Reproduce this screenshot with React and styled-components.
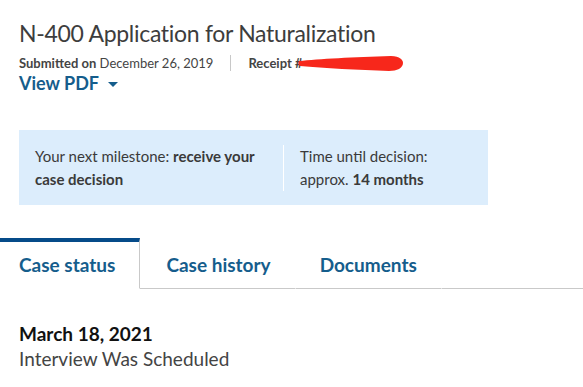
import React, { useState } from "react";
import styled, { createGlobalStyle } from "styled-components";

const GlobalStyle = createGlobalStyle`
  html, body {
    margin: 0;
    padding: 0;
    background: #fff;
    font-family: Lato, "Open Sans", sans-serif;
    color: #333;
  }
`;

const Page = styled.div`
  width: 583px;
  height: 387px;
  overflow: hidden;
`;

const Header = styled.div`
  padding: 16px 19px 0;
`;

const Title = styled.h1`
  margin: 0;
  font-size: 23px;
  font-weight: 400;
  line-height: 34px;
  color: #3d3d3d;
  letter-spacing: -0.3px;
`;

const Meta = styled.div`
  display: flex;
  align-items: center;
  font-size: 13px;
  line-height: 18px;
  color: #444;
  margin-top: 4px;
  b {
    font-weight: 700;
  }
`;

const Divider = styled.span`
  width: 1px;
  height: 16px;
  background: #c8c8c8;
  margin: 0 17px 0 17px;
`;

const Scribble = styled.svg`
  display: block;
  margin-left: -4px;
`;

const PdfLink = styled.a`
  display: inline-flex;
  align-items: center;
  gap: 9px;
  margin-top: 0;
  font-size: 18px;
  font-weight: 700;
  color: #155d8c;
  text-decoration: none;
  cursor: pointer;
`;

const Caret = styled.span`
  width: 0;
  height: 0;
  border-left: 5px solid transparent;
  border-right: 5px solid transparent;
  border-top: 5px solid #155d8c;
  margin-top: 2px;
`;

const Milestone = styled.div`
  display: flex;
  align-items: center;
  margin: 36px 0 0 19px;
  width: 469px;
  height: 75px;
  box-sizing: border-box;
  padding: 0 16px;
  background: #dcedfc;
  font-size: 15px;
  line-height: 23px;
  color: #3a3a3a;
  b {
    font-weight: 700;
  }
`;

const MilestoneCell = styled.div`
  width: ${(p) => p.$width}px;
`;

const VRule = styled.div`
  width: 1px;
  align-self: stretch;
  margin: 15px 16px 14px 0;
  background: #fff;
`;

const Tabs = styled.div`
  display: flex;
  margin-top: 33px;
  height: 51px;
`;

const Tab = styled.button`
  border: none;
  background: #fff;
  font-family: inherit;
  font-size: 19px;
  font-weight: 700;
  color: #155d8c;
  padding: 0 24px 0 ${(p) => p.$left}px;
  cursor: pointer;
  box-sizing: border-box;
  border-top: 4px solid ${(p) => (p.$active ? "#054b89" : "transparent")};
  border-right: 1px solid ${(p) => (p.$active ? "#c9c9c9" : "transparent")};
  border-bottom: 1px solid ${(p) => (p.$active ? "transparent" : "#c9c9c9")};
  padding-bottom: 1px;
`;

const TabFill = styled.div`
  flex: 1;
  border-bottom: 1px solid #c9c9c9;
`;

const Content = styled.div`
  padding: 32px 19px 0;
`;

const EventDate = styled.div`
  font-size: 19px;
  font-weight: 700;
  color: #111;
  line-height: 25px;
`;

const EventTitle = styled.div`
  font-size: 19px;
  color: #444;
  line-height: 25px;
`;

const EventBody = styled.p`
  margin: 10px 0 0;
  font-size: 15px;
  color: #444;
  line-height: 22px;
`;

const tabs = [
  { label: "Case status", left: 19 },
  { label: "Case history", left: 26 },
  { label: "Documents", left: 24 },
];

const App = () => {
  const [active, setActive] = useState(0);

  return (
    <Page>
      <GlobalStyle />
      <Header>
        <Title>N-400 Application for Naturalization</Title>
        <Meta>
          <span>
            <b>Submitted on</b> December 26, 2019
          </span>
          <Divider />
          <b>Receipt #</b>
          {/* redaction mark over the receipt number */}
          <Scribble width="106" height="17" viewBox="0 0 106 17">
            <path
              d="M1 6 C20 4 56 2 93 1 C102 1 105 5 105 8 C105 13 99 16 91 16 C60 15 26 13 2 11 C0 10 0 7 1 6 Z"
              fill="#f7271b"
            />
          </Scribble>
        </Meta>
        <PdfLink>
          View PDF <Caret />
        </PdfLink>
      </Header>

      <Milestone>
        <MilestoneCell $width={248}>
          Your next milestone: <b>receive your case decision</b>
        </MilestoneCell>
        <VRule />
        <MilestoneCell $width={170}>
          Time until decision: approx. <b>14 months</b>
        </MilestoneCell>
      </Milestone>

      <Tabs>
        {tabs.map((t, i) => (
          <Tab
            key={t.label}
            $active={active === i}
            $left={t.left}
            onClick={() => setActive(i)}
          >
            {t.label}
          </Tab>
        ))}
        <TabFill />
      </Tabs>

      <Content>
        <EventDate>March 18, 2021</EventDate>
        <EventTitle>Interview Was Scheduled</EventTitle>
        <EventBody>
          Your interview was scheduled. We sent you an interview notice with the
          date, time and location.
        </EventBody>
      </Content>
    </Page>
  );
};

export default App;
